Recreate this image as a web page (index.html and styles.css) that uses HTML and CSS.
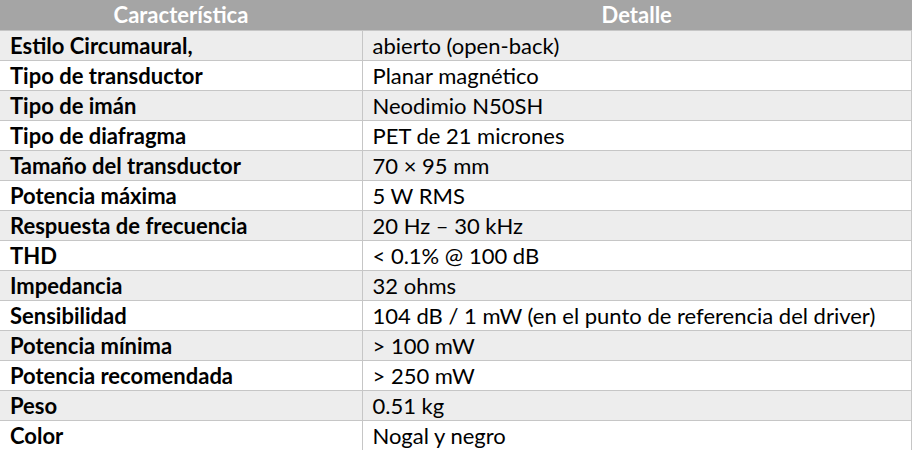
FILE: index.html
```html
<!DOCTYPE html>
<html lang="es">
<head>
<meta charset="utf-8">
<link rel="stylesheet" href="styles.css">
</head>
<body>
<table class="spec">
  <thead>
    <tr><th class="c1">Característica</th><th class="c2">Detalle</th></tr>
  </thead>
  <tbody>
    <tr><td class="k">Estilo Circumaural,</td><td>abierto (open-back)</td></tr>
    <tr><td class="k">Tipo de transductor</td><td>Planar magnético</td></tr>
    <tr><td class="k">Tipo de imán</td><td>Neodimio N50SH</td></tr>
    <tr><td class="k">Tipo de diafragma</td><td>PET de 21 micrones</td></tr>
    <tr><td class="k">Tamaño del transductor</td><td>70 × 95 mm</td></tr>
    <tr><td class="k">Potencia máxima</td><td>5 W RMS</td></tr>
    <tr><td class="k">Respuesta de frecuencia</td><td>20 Hz – 30 kHz</td></tr>
    <tr><td class="k">THD</td><td>&lt; 0.1% @ 100 dB</td></tr>
    <tr><td class="k">Impedancia</td><td>32 ohms</td></tr>
    <tr><td class="k">Sensibilidad</td><td>104 dB / 1 mW (en el punto de referencia del driver)</td></tr>
    <tr><td class="k">Potencia mínima</td><td>&gt; 100 mW</td></tr>
    <tr><td class="k">Potencia recomendada</td><td>&gt; 250 mW</td></tr>
    <tr><td class="k">Peso</td><td>0.51 kg</td></tr>
    <tr><td class="k">Color</td><td>Nogal y negro</td></tr>
  </tbody>
</table>
</body>
</html>
```
FILE: styles.css
```css
html, body {
  margin: 0;
  padding: 0;
  background: #ffffff;
}
.spec {
  width: 912px;
  border-collapse: collapse;
  table-layout: fixed;
  font-family: Lato, "Open Sans", sans-serif;
  font-size: 22px;
  line-height: 26px;
  color: #000;
}
.spec th {
  background: #a5a5a5;
  color: #ffffff;
  font-weight: 700;
  height: 30px;
  padding: 0;
  text-align: center;
  border-bottom: 1px solid #c6c6c6;
}
.spec .c1 { width: 362px; }
.spec td {
  height: 29px;
  padding: 0 0 0 10px;
  border-bottom: 1px solid #c6c6c6;
  border-left: 1px solid #c6c6c6;
  border-right: 1px solid #c6c6c6;
  white-space: nowrap;
  vertical-align: middle;
}
.spec td.k {
  font-weight: 700;
  border-left: none;
}
.spec tbody tr:nth-child(odd) td {
  background: #ededed;
}
.spec tbody tr:last-child td {
  border-bottom: none;
}
```
